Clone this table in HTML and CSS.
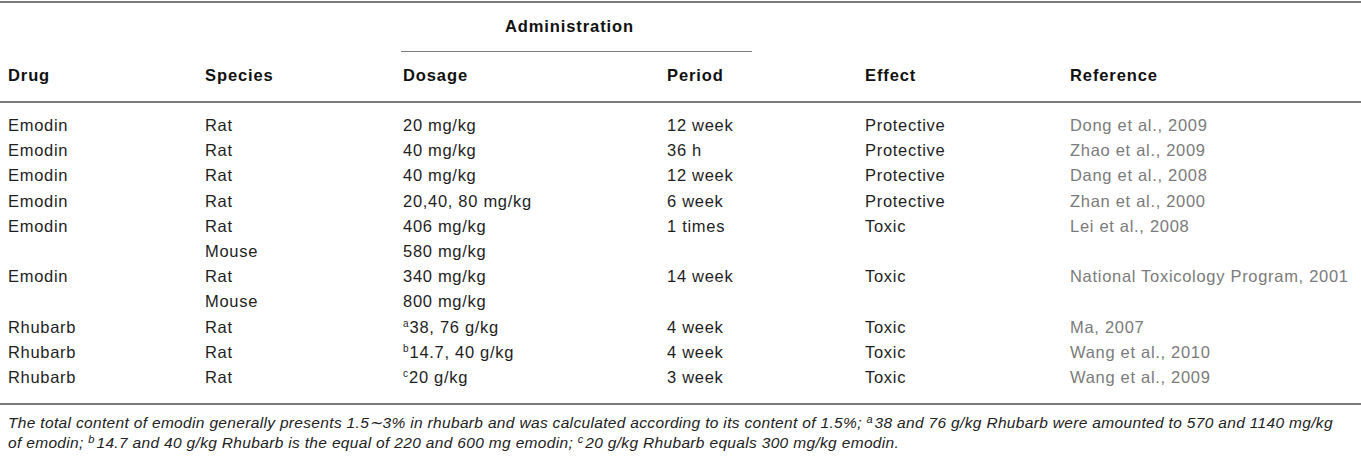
FILE: index.html
```html
<!DOCTYPE html>
<html>
<head>
<meta charset="utf-8">
<link rel="stylesheet" href="styles.css">
</head>
<body>
<div class="wrap">
<table class="tbl">
  <colgroup>
    <col class="c1"><col class="c2"><col class="c3"><col class="c4"><col class="c5"><col class="c6">
  </colgroup>
  <thead>
    <tr class="h1">
      <th></th><th></th>
      <th colspan="2" class="admin"><div class="admin-box">Administration</div></th>
      <th></th><th></th>
    </tr>
    <tr class="h2">
      <th>Drug</th><th>Species</th><th>Dosage</th><th>Period</th><th>Effect</th><th>Reference</th>
    </tr>
  </thead>
  <tbody>
    <tr class="first"><td>Emodin</td><td>Rat</td><td>20 mg/kg</td><td>12 week</td><td>Protective</td><td class="ref">Dong et al., 2009</td></tr>
    <tr><td>Emodin</td><td>Rat</td><td>40 mg/kg</td><td>36 h</td><td>Protective</td><td class="ref">Zhao et al., 2009</td></tr>
    <tr><td>Emodin</td><td>Rat</td><td>40 mg/kg</td><td>12 week</td><td>Protective</td><td class="ref">Dang et al., 2008</td></tr>
    <tr><td>Emodin</td><td>Rat</td><td>20,40, 80 mg/kg</td><td>6 week</td><td>Protective</td><td class="ref">Zhan et al., 2000</td></tr>
    <tr><td>Emodin</td><td>Rat</td><td>406 mg/kg</td><td>1 times</td><td>Toxic</td><td class="ref">Lei et al., 2008</td></tr>
    <tr><td></td><td>Mouse</td><td>580 mg/kg</td><td></td><td></td><td></td></tr>
    <tr><td>Emodin</td><td>Rat</td><td>340 mg/kg</td><td>14 week</td><td>Toxic</td><td class="ref">National Toxicology Program, 2001</td></tr>
    <tr><td></td><td>Mouse</td><td>800 mg/kg</td><td></td><td></td><td></td></tr>
    <tr><td>Rhubarb</td><td>Rat</td><td><sup>a</sup>38, 76 g/kg</td><td>4 week</td><td>Toxic</td><td class="ref">Ma, 2007</td></tr>
    <tr><td>Rhubarb</td><td>Rat</td><td><sup>b</sup>14.7, 40 g/kg</td><td>4 week</td><td>Toxic</td><td class="ref">Wang et al., 2010</td></tr>
    <tr class="last"><td>Rhubarb</td><td>Rat</td><td><sup>c</sup>20 g/kg</td><td>3 week</td><td>Toxic</td><td class="ref">Wang et al., 2009</td></tr>
  </tbody>
</table>
<p class="note">The total content of emodin generally presents 1.5∼3% in rhubarb and was calculated according to its content of 1.5%; <sup>a</sup>38 and 76 g/kg Rhubarb were amounted to 570 and 1140 mg/kg of emodin; <sup>b</sup>14.7 and 40 g/kg Rhubarb is the equal of 220 and 600 mg emodin; <sup>c</sup>20 g/kg Rhubarb equals 300 mg/kg emodin.</p>
</div>
</body>
</html>
```
FILE: styles.css
```css
html, body {
  margin: 0;
  padding: 0;
  background: #ffffff;
}
body {
  font-family: "Liberation Sans", Arial, sans-serif;
  color: #1e1e1e;
}
.wrap {
  padding-top: 1px;
}
.tbl {
  width: 1361px;
  border-collapse: collapse;
  table-layout: fixed;
  border-top: 2px solid #7a7a7a;
  border-bottom: 2px solid #7a7a7a;
}
.c1 { width: 205px; }
.c2 { width: 198px; }
.c3 { width: 264px; }
.c4 { width: 198px; }
.c5 { width: 205px; }
.c6 { width: 291px; }
th {
  font-weight: bold;
  font-size: 16.5px;
  text-align: left;
  padding: 0;
  color: #111;
  letter-spacing: 0.9px;
}
th:first-child, td:first-child {
  padding-left: 8px;
}
.h1 th {
  height: 50px;
  vertical-align: top;
}
.admin {
  padding-left: 0;
}
.admin-box {
  width: 351px;
  margin-left: -2px;
  border-bottom: 1px solid #7a7a7a;
  height: 49px;
  box-sizing: border-box;
  padding-top: 14px;
  padding-right: 14px;
  text-align: center;
}
.h2 th {
  height: 45px;
  padding-bottom: 3px;
  border-bottom: 2px solid #7a7a7a;
  vertical-align: middle;
}
td {
  font-size: 16.5px;
  padding: 0;
  height: 25.2px;
  line-height: 25.2px;
  white-space: nowrap;
  letter-spacing: 0.7px;
}
.first td {
  padding-top: 10px;
}
.last td {
  padding-bottom: 13px;
}
.ref {
  color: #7b7b7b;
}
sup {
  font-size: 10px;
  line-height: 0;
  vertical-align: 6px;
  margin-right: 1px;
  letter-spacing: 0;
}
.note {
  margin: 8px 0 0 8px;
  width: 1330px;
  font-style: italic;
  font-size: 15.5px;
  line-height: 20px;
  color: #222;
  letter-spacing: 0.33px;
}
.note sup {
  font-size: 11px;
  vertical-align: 5px;
  margin-right: 2px;
}
```
